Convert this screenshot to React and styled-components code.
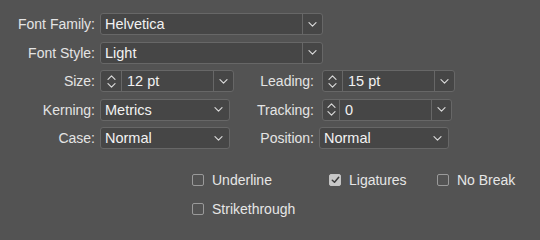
import React from "react";
import styled, { createGlobalStyle } from "styled-components";

const Global = createGlobalStyle`
  html, body { margin: 0; padding: 0; background: #535353; }
  body { font-family: "Liberation Sans", Arial, sans-serif; }
`;

const Panel = styled.div`
  width: 540px;
  height: 240px;
  box-sizing: border-box;
  padding-top: 13px;
  background: #535353;
  color: #e6e6e6;
  font-size: 14px;
  display: flex;
  flex-direction: column;
`;

const Rows = styled.div`
  display: flex;
  flex-direction: column;
  gap: 6.5px;
`;

const Row = styled.div`
  display: grid;
  grid-template-columns: 95px 134px 75px auto;
  column-gap: 5px;
  align-items: center;
  height: 22px;
`;

const Label = styled.div`
  text-align: right;
  white-space: nowrap;
  color: #e4e4e4;
  font-size: 14px;
`;

const Field = styled.div`
  display: flex;
  align-items: stretch;
  height: 22px;
  box-sizing: border-box;
  width: ${(p) => p.$w}px;
  margin-left: ${(p) => p.$ml || 0}px;
  grid-column: ${(p) => p.$span || "auto"};
  border: 1px solid #676767;
  border-radius: 3px;
  background: #464646;
  justify-self: start;
  overflow: hidden;
`;

const Value = styled.div`
  flex: 1;
  display: flex;
  align-items: center;
  padding-left: ${(p) => p.$pl || 4}px;
  color: #f2f2f2;
  font-size: 14.5px;
  white-space: nowrap;
`;

const DropBtn = styled.div`
  width: ${(p) => p.$w || 19}px;
  display: flex;
  align-items: center;
  justify-content: center;
  border-left: ${(p) => (p.$divider ? "1px solid #676767" : "none")};
`;

const Stepper = styled.div`
  width: ${(p) => p.$w || 19}px;
  display: flex;
  flex-direction: column;
  align-items: center;
  justify-content: center;
  gap: 3px;
  border-right: 1px solid #676767;
`;

const Chevron = ({ up }) => (
  <svg width="9" height="5" viewBox="0 0 9 5">
    <path
      d={up ? "M1 4.3 L4.5 0.8 L8 4.3" : "M1 0.7 L4.5 4.2 L8 0.7"}
      fill="none"
      stroke="#d8d8d8"
      strokeWidth="1.2"
      strokeLinecap="round"
      strokeLinejoin="round"
    />
  </svg>
);

const Checks = styled.div`
  margin-top: 23px;
  margin-left: 192px;
  display: grid;
  grid-template-columns: 137px 108px auto;
  row-gap: 13px;
`;

const CheckItem = styled.label`
  display: flex;
  align-items: center;
  gap: 8px;
  height: 16px;
  color: #e6e6e6;
  font-size: 14px;
  white-space: nowrap;
`;

const Box = styled.span`
  width: 12px;
  height: 12px;
  flex: none;
  box-sizing: border-box;
  border-radius: 2px;
  border: 1px solid ${(p) => (p.$on ? "#c4c4c4" : "#9a9a9a")};
  background: ${(p) => (p.$on ? "#c8c8c8" : "transparent")};
  display: flex;
  align-items: center;
  justify-content: center;
`;

const Check = ({ on, children }) => (
  <CheckItem>
    <Box $on={on}>
      {on && (
        <svg width="9" height="8" viewBox="0 0 9 8">
          <path
            d="M1.3 4.2 L3.5 6.3 L7.7 1.3"
            fill="none"
            stroke="#3c3c3c"
            strokeWidth="1.5"
            strokeLinecap="round"
            strokeLinejoin="round"
          />
        </svg>
      )}
    </Box>
    {children}
  </CheckItem>
);

const Combo = ({ w, ml, span, value, stepper, stepW, divider }) => (
  <Field $w={w} $ml={ml} $span={span}>
    {stepper && (
      <Stepper $w={stepW}>
        <Chevron up />
        <Chevron />
      </Stepper>
    )}
    <Value $pl={stepper ? 5 : 4}>{value}</Value>
    <DropBtn $divider={divider} $w={divider ? 19 : 22}>
      <Chevron />
    </DropBtn>
  </Field>
);

export default function App() {
  return (
    <Panel>
      <Global />
      <Rows>
        <Row>
          <Label>Font Family:</Label>
          <Combo w={223} span="2 / 5" value="Helvetica" divider />
        </Row>
        <Row>
          <Label>Font Style:</Label>
          <Combo w={223} span="2 / 5" value="Light" divider />
        </Row>
        <Row>
          <Label>Size:</Label>
          <Combo w={134} value="12 pt" stepper stepW={20} divider />
          <Label>Leading:</Label>
          <Combo w={133} ml={3} value="15 pt" stepper stepW={19} divider />
        </Row>
        <Row>
          <Label>Kerning:</Label>
          <Combo w={130} value="Metrics" />
          <Label>Tracking:</Label>
          <Combo w={130} ml={3} value="0" stepper stepW={16} divider />
        </Row>
        <Row>
          <Label>Case:</Label>
          <Combo w={130} value="Normal" />
          <Label>Position:</Label>
          <Combo w={130} value="Normal" />
        </Row>
      </Rows>
      <Checks>
        <Check>Underline</Check>
        <Check on>Ligatures</Check>
        <Check>No Break</Check>
        <Check>Strikethrough</Check>
      </Checks>
    </Panel>
  );
}
